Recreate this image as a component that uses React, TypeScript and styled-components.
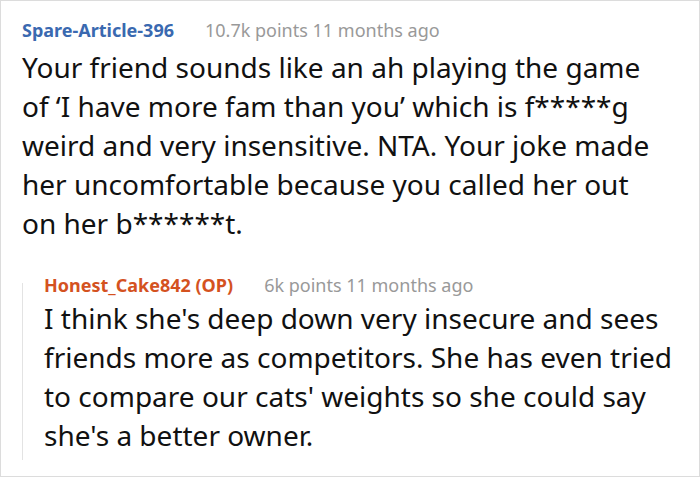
import React from "react";
import styled, { createGlobalStyle } from "styled-components";

const Global = createGlobalStyle`
  html, body { margin: 0; padding: 0; background: #fff; }
  body { font-family: "Noto Sans", "Open Sans", sans-serif; }
`;

const Frame = styled.div`
  box-sizing: border-box;
  width: 700px;
  height: 477px;
  border: 1px solid #dcdcdc;
  padding: 17px 10px 0 21px;
  overflow: hidden;
`;

const Comment = styled.div`
  display: flex;
  flex-direction: column;
`;

const Reply = styled.div`
  display: flex;
  flex-direction: column;
  margin-top: 40px;
  border-left: 1px solid #e3e3e3;
  padding: 0 0 5px 21px;
`;

const Meta = styled.div<{ $lift?: boolean }>`
  display: flex;
  align-items: baseline;
  gap: 31px;
  font-size: 18px;
  line-height: 24px;
  margin-bottom: 6px;
  ${(p) => (p.$lift ? "margin-top: -10px; margin-bottom: 2px;" : "")}
`;

const User = styled.span<{ $color: string }>`
  font-weight: 700;
  color: ${(p) => p.$color};
`;

const Info = styled.span`
  color: #999999;
`;

const Body = styled.p`
  margin: 0;
  max-width: 636px;
  font-size: 28px;
  line-height: 39px;
  color: #111;
`;

export default function App() {
  return (
    <>
      <Global />
      <Frame>
        <Comment>
          <Meta>
            <User $color="#3a69b0">Spare-Article-396</User>
            <Info>10.7k points 11 months ago</Info>
          </Meta>
          <Body>
            Your friend sounds like an ah playing the game of ‘I have more fam than you’ which is f*****g
            weird and very insensitive. NTA. Your joke made her uncomfortable because you called her out
            on her b******t.
          </Body>
          <Reply>
            <Meta $lift>
              <User $color="#d4521f">Honest_Cake842 (OP)</User>
              <Info>6k points 11 months ago</Info>
            </Meta>
            <Body>
              I think she's deep down very insecure and sees friends more as competitors. She has even
              tried to compare our cats' weights so she could say she's a better owner.
            </Body>
          </Reply>
        </Comment>
      </Frame>
    </>
  );
}
